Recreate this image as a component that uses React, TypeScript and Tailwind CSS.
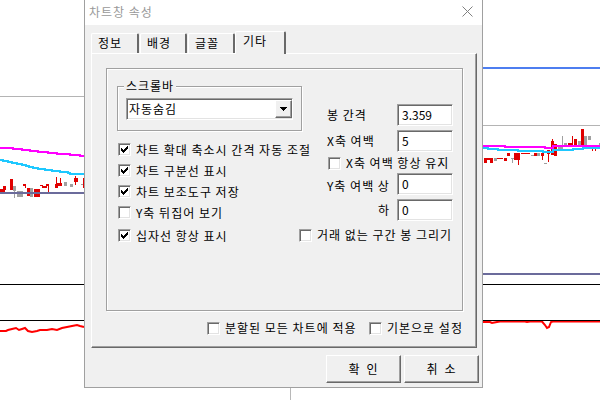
import React from "react";

const FONT = "font-['Noto_Sans_CJK_KR',sans-serif]";
const sunken =
  "border border-t-[#a0a0a0] border-l-[#a0a0a0] border-b-white border-r-white shadow-[inset_1px_1px_0_#696969,inset_-1px_-1px_0_#e3e3e3]";
const raised =
  "border border-t-white border-l-white border-b-[#696969] border-r-[#696969] shadow-[inset_-1px_-1px_0_#a0a0a0]";
const etched = "border border-[#a0a0a0] shadow-[inset_1px_1px_0_#ffffff,1px_1px_0_#ffffff]";

const checkPx: [number, number][] = [
  [6, 0], [5, 1], [6, 1], [0, 2], [4, 2], [5, 2], [6, 2], [0, 3], [1, 3], [3, 3], [4, 3], [5, 3],
  [0, 4], [1, 4], [2, 4], [3, 4], [4, 4], [1, 5], [2, 5], [3, 5], [2, 6],
];

function CheckBox({ checked }: { checked?: boolean }) {
  return (
    <span className={`w-[13px] h-[13px] shrink-0 bg-white flex items-center justify-center ${sunken}`}>
      {checked && (
        <svg width="7" height="7" shapeRendering="crispEdges">
          {checkPx.map(([x, y]) => (
            <rect key={`${x}-${y}`} x={x} y={y} width="1" height="1" fill="#000" />
          ))}
        </svg>
      )}
    </span>
  );
}

function CheckRow({ checked, label, className = "" }: { checked?: boolean; label: string; className?: string }) {
  return (
    <div className={`flex items-center whitespace-nowrap ${className}`}>
      <CheckBox checked={checked} />
      <span className="ml-[5px]">{label}</span>
    </div>
  );
}

function Input({ value }: { value: string }) {
  return (
    <div className={`w-[56px] h-[22px] bg-white flex items-center pl-[4px] pb-[1px] tracking-normal ${sunken}`}>{value}</div>
  );
}

type C = [number, number, number, number, string];
const R = "#e00000";
const G = "#a0a0a0";
const leftCandles: C[] = [
  [0, 189, 4, 4, R], [3, 186, 3, 4, R], [4, 190, 1, 4, R], [10, 179, 3, 11, R], [13, 186, 3, 5, G],
  [14, 191, 1, 7, G], [17, 191, 6, 6, G], [23, 184, 3, 2, R], [25, 185, 1, 3, R], [27, 188, 3, 8, R],
  [30, 188, 3, 9, G], [34, 189, 6, 8, R], [40, 185, 3, 1, R], [42, 185, 1, 3, R], [43, 186, 4, 2, R],
  [48, 184, 1, 8, R], [46, 184, 3, 2, R], [55, 184, 3, 4, R], [56, 177, 1, 7, R], [57, 183, 5, 3, R],
  [60, 178, 1, 5, R], [64, 182, 3, 4, G], [70, 184, 3, 3, G], [74, 178, 4, 4, R], [75, 176, 1, 9, R],
  [81, 184, 3, 1, G], [83, 178, 1, 10, R],
];
const rightCandles: C[] = [
  [484, 158, 9, 2, R], [484, 158, 3, 5, R], [490, 158, 3, 5, R], [494, 158, 3, 3, G], [497, 158, 6, 1, R],
  [504, 158, 3, 3, R], [507, 153, 3, 3, R], [511, 158, 3, 1, G], [512, 159, 1, 4, G], [514, 153, 6, 7, R],
  [518, 160, 1, 5, R], [521, 153, 9, 1, R], [531, 155, 5, 1, G], [534, 153, 3, 3, R], [537, 153, 3, 3, G],
  [541, 153, 3, 3, R], [542, 156, 1, 4, R], [544, 163, 3, 1, G], [547, 150, 3, 4, R], [548, 154, 1, 8, R],
  [551, 141, 3, 14, R], [552, 139, 1, 2, R], [554, 144, 3, 12, R], [558, 147, 5, 2, G], [562, 136, 1, 13, G],
  [564, 143, 3, 3, G], [568, 143, 4, 3, R], [572, 136, 1, 9, R], [574, 139, 3, 7, R], [578, 141, 4, 4, G],
  [581, 129, 3, 16, R], [584, 136, 3, 9, G], [588, 136, 3, 4, G], [592, 149, 1, 2, R], [595, 149, 1, 2, R],
  [599, 143, 1, 3, G],
];

function steps(pts: [number, number][]) {
  let d = `M${pts[0][0]} ${pts[0][1]}`;
  for (let i = 1; i < pts.length; i++) {
    d += ` H${pts[i][0]} V${pts[i][1]}`;
  }
  return d;
}

function Chart() {
  return (
    <svg width="600" height="400" className="absolute inset-0" shapeRendering="crispEdges">
      <line x1="290.5" y1="0" x2="290.5" y2="400" stroke="#b8b8b8" />
      {/* left pane */}
      <line x1="0" y1="96.5" x2="84" y2="96.5" stroke="#b4b4b4" />
      <path
        d={steps([[0, 160], [3, 161], [8, 162], [12, 163], [17, 164], [22, 165], [26, 166], [29, 167], [33, 168], [38, 169], [45, 170], [52, 171], [60, 172], [68, 173], [70, 174], [84, 174]])}
        stroke="#1ec8ff" strokeWidth="2" fill="none"
      />
      <path
        d={steps([[0, 148], [13, 149], [22, 150], [30, 151], [38, 152], [48, 153], [57, 154], [70, 155], [80, 156], [84, 156]])}
        stroke="#ff00ff" strokeWidth="2" fill="none"
      />
      {leftCandles.map((c, i) => (
        <rect key={i} x={c[0]} y={c[1]} width={c[2]} height={c[3]} fill={c[4]} />
      ))}
      <rect x="0" y="192" width="84" height="2" fill="#6b6b9b" />
      <line x1="0" y1="284.5" x2="84" y2="284.5" stroke="#000" />
      <line x1="0" y1="320.5" x2="84" y2="320.5" stroke="#000" />
      <polyline
        points="0,331 6,331 8,330 12,329 16,328 19,330 22,329 25,328 28,331 32,332 37,331 40,330 47,330 52,329 57,330 62,328 67,327 72,326 77,325 80,326 84,327"
        stroke="#ff0000" strokeWidth="2" fill="none" shapeRendering="auto"
      />
      {/* right pane */}
      <rect x="482" y="67" width="118" height="2" fill="#4d7ef0" />
      <line x1="482" y1="125.5" x2="600" y2="125.5" stroke="#b4b4b4" />
      {rightCandles.map((c, i) => (
        <rect key={i} x={c[0]} y={c[1]} width={c[2]} height={c[3]} fill={c[4]} />
      ))}
      <path
        d={steps([[482, 148], [488, 149], [498, 150], [518, 151], [543, 152], [553, 150], [573, 149], [583, 148], [600, 148]])}
        stroke="#1ec8ff" strokeWidth="2" fill="none"
      />
      <path
        d={steps([[482, 146], [505, 147], [545, 148], [553, 146], [600, 146]])}
        stroke="#ff00ff" strokeWidth="2" fill="none"
      />
      <rect x="482" y="273" width="118" height="2" fill="#6b6b9b" />
      <line x1="482" y1="284.5" x2="600" y2="284.5" stroke="#000" />
      <polyline
        points="482,322 490,322 492,323 497,322 500,321.5 525,321.5 527,322 530,321.5 542,321.5 545,325 547,328 549,327 551,322 553,321.5 600,321.5"
        stroke="#ff0000" strokeWidth="2" fill="none" shapeRendering="auto"
      />
      <line x1="482" y1="320.5" x2="600" y2="320.5" stroke="#000" />
    </svg>
  );
}

function Tab({ label, w, selected }: { label: string; w: string; selected?: boolean }) {
  return (
    <div
      className={`${w} ${
        selected ? "h-[23px] -mb-[1px] pl-[7px] pt-[1px] z-10" : "h-[20px] pl-[6px] pt-[1px]"
      } relative bg-[#f0f0f0] border-l border-t border-r-2 border-l-white border-t-white border-r-[#696969] rounded-t-[2px] leading-[16px]`}
    >
      {label}
    </div>
  );
}

function Dialog() {
  return (
    <div
      className={`absolute left-[84px] top-0 w-[399px] h-[388px] border-l border-r border-b border-[#a0a0a0] flex flex-col text-[12px] tracking-[1px] text-black ${FONT}`}
    >
      {/* title bar */}
      <div className="h-[25px] bg-white flex items-center justify-between pl-[4px] pr-[9px]">
        <span className="text-[#999999] text-[12px] leading-[14px] pb-[1px]">차트창 속성</span>
        <svg width="11" height="11" viewBox="0 0 11 11" className="mb-[2px]">
          <path d="M0.5 0.5 L10.5 10.5 M10.5 0.5 L0.5 10.5" stroke="#808080" strokeWidth="1" />
        </svg>
      </div>
      {/* body */}
      <div className="flex-1 bg-[#f0f0f0] flex flex-col pl-[6px]">
        <div className="h-[22px] mt-[6px] flex items-end">
          <Tab label="정보" w="w-[48px]" />
          <Tab label="배경" w="w-[47px] ml-[1px]" />
          <Tab label="글꼴" w="w-[47px] ml-[1px]" />
          <Tab label="기타" w="w-[51px]" selected />
        </div>
        {/* panel */}
        <div className="w-[386px] h-[295px] border border-t-white border-l-white border-r-[#696969] border-b-[#696969] shadow-[inset_-1px_-1px_0_#a0a0a0] flex flex-col">
          <div className={`ml-[14px] mt-[14px] w-[357px] h-[243px] ${etched} flex leading-[14px]`}>
            {/* left column */}
            <div className="w-[220px] flex flex-col">
              <div className={`relative ml-[10px] mt-[17px] w-[185px] h-[45px] ${etched}`}>
                <span className="absolute left-[6px] -top-[8px] px-[2px] bg-[#f0f0f0] leading-[14px]">스크롤바</span>
                <div className={`ml-[8px] mt-[11px] w-[167px] h-[22px] bg-white flex items-center justify-between ${sunken}`}>
                  <span className="pl-[2px]">자동숨김</span>
                  <div className={`w-[17px] h-[18px] bg-[#f0f0f0] flex items-center justify-center ${raised}`}>
                    <svg width="7" height="4" viewBox="0 0 7 4" shapeRendering="crispEdges">
                      <path d="M0 0 H7 L3.5 4 Z" fill="#000" />
                    </svg>
                  </div>
                </div>
              </div>
              <div className="mt-[8px] ml-[11px] flex flex-col">
                <CheckRow checked label="차트 확대 축소시 간격 자동 조절" className="h-[21px]" />
                <CheckRow checked label="차트 구분선 표시" className="h-[21px]" />
                <CheckRow checked label="차트 보조도구 저장" className="h-[21px]" />
                <CheckRow label="Y축 뒤집어 보기" className="h-[21px]" />
                <CheckRow checked label="십자선 항상 표시" className="h-[21px] mt-[2px]" />
              </div>
            </div>
            {/* right column */}
            <div className="flex flex-col mt-[35px]">
              <div className="flex items-center h-[22px]">
                <span className="w-[70px]">봉 간격</span>
                <Input value="3.359" />
              </div>
              <div className="flex items-center h-[22px] mt-[4px]">
                <span className="w-[70px]">X축 여백</span>
                <Input value="5" />
              </div>
              <CheckRow label="X축 여백 항상 유지" className="h-[16px] mt-[3px] ml-[1px]" />
              <div className="flex items-center h-[22px] mt-[2px]">
                <span className="w-[70px] pt-[4px] whitespace-nowrap">Y축 여백 상</span>
                <Input value="0" />
              </div>
              <div className="flex items-center h-[22px] mt-[4px]">
                <span className="w-[70px] text-right pr-[7px]">하</span>
                <Input value="0" />
              </div>
              <CheckRow label="거래 없는 구간 봉 그리기" className="h-[16px] mt-[6px] -ml-[28px]" />
            </div>
          </div>
          <div className="flex items-center h-[16px] mt-[9px] pl-[115px] leading-[14px]">
            <CheckRow label="분할된 모든 차트에 적용" className="w-[162px]" />
            <CheckRow label="기본으로 설정" />
          </div>
        </div>
        {/* buttons */}
        <div className="flex justify-end gap-[3px] pr-[3px] mt-[7px]">
          <div className={`w-[75px] h-[28px] flex items-center justify-center gap-[6px] ${raised}`}>
            <span>확</span>
            <span>인</span>
          </div>
          <div className={`w-[75px] h-[28px] flex items-center justify-center gap-[6px] ${raised}`}>
            <span>취</span>
            <span>소</span>
          </div>
        </div>
      </div>
    </div>
  );
}

export default function App() {
  return (
    <div className="relative w-[600px] h-[400px] overflow-hidden bg-white">
      <Chart />
      <Dialog />
    </div>
  );
}
